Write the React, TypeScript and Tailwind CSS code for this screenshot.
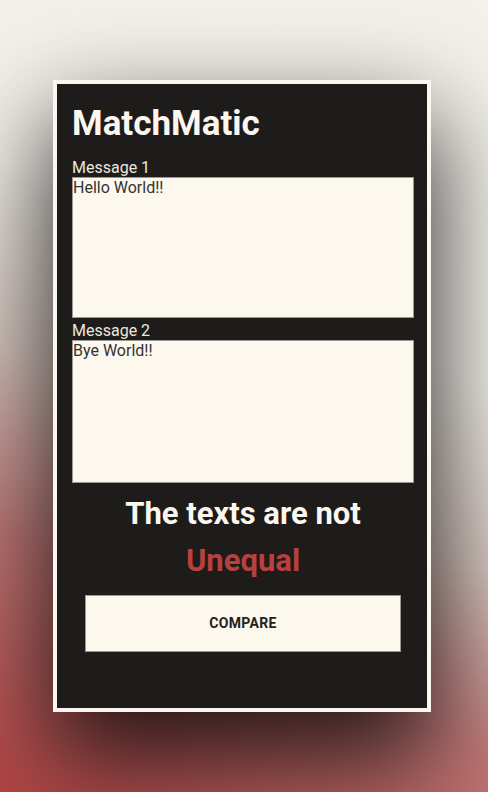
import { useState } from 'react';

export default function App() {
  const [first, setFirst] = useState('Hello World!!');
  const [second, setSecond] = useState('Bye World!!');

  return (
    <div className="min-h-screen w-full flex items-center justify-center pr-[4px] bg-[linear-gradient(25deg,#b54545_0%,#c27a78_26%,#d9c9c2_44%,#f3f0ea_62%,#f4f1eb_100%)] font-['Roboto',sans-serif]">
      <div className="w-[378px] border-4 border-[#fbf7ee] bg-[#1e1c1b] pl-[15px] pr-[13px] pt-[19px] pb-[56px] shadow-[0_45px_95px_5px_rgba(0,0,0,0.8)] flex flex-col">
        <h1 className="text-[35px] leading-[41px] font-bold text-[#fbf7ee] mb-[14px]">MatchMatic</h1>

        <label className="text-[16px] leading-[19px] text-[#ece8df]">Message 1</label>
        <textarea
          value={first}
          onChange={(e) => setFirst(e.target.value)}
          className="h-[141px] w-full resize-none bg-[#fcf8ee] border border-[#9a9894] p-0 text-[16px] leading-[19px] text-[#333] outline-none font-['Roboto',sans-serif]"
        />

        <label className="mt-[3px] text-[16px] leading-[19px] text-[#ece8df]">Message 2</label>
        <textarea
          value={second}
          onChange={(e) => setSecond(e.target.value)}
          className="h-[143px] w-full resize-none bg-[#fcf8ee] border border-[#9a9894] p-0 text-[16px] leading-[19px] text-[#333] outline-none font-['Roboto',sans-serif]"
        />

        <h2 className="mt-[13px] text-center text-[31px] leading-[36px] font-bold text-[#fbf7ee]">The texts are not</h2>
        <h2 className="mt-[11px] text-center text-[31px] leading-[36px] font-bold text-[#b8403f]">Unequal</h2>

        <button className="mt-[16px] mx-auto w-[316px] h-[57px] bg-[#fcf8ee] border border-[#9a9894] text-[14px] font-bold text-[#222] tracking-[0.3px]">
          COMPARE
        </button>
      </div>
    </div>
  );
}
